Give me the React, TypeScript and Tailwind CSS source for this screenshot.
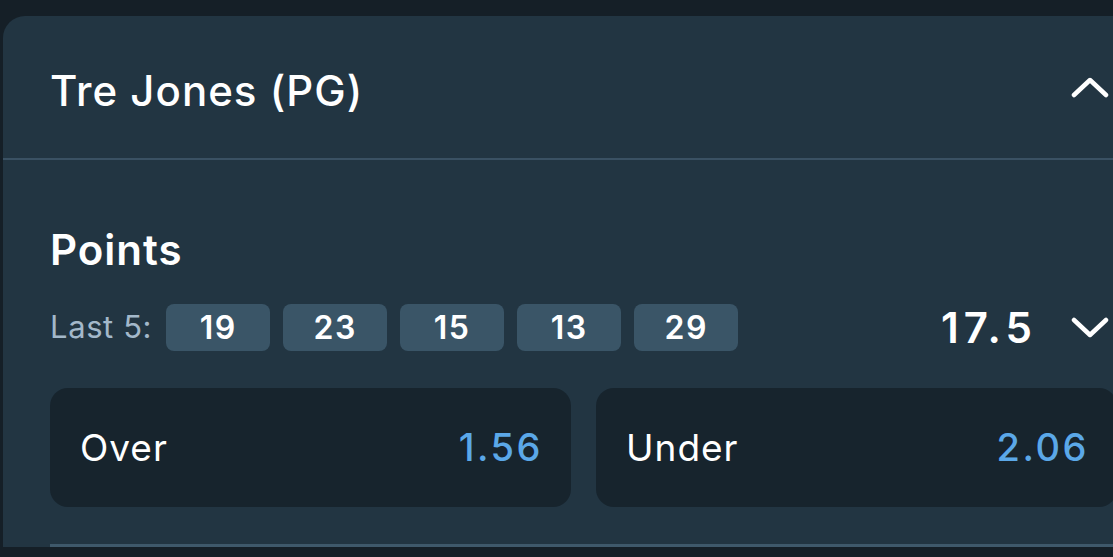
const lastFive = [19, 23, 15, 13, 29];

const Chevron = ({ up }: { up?: boolean }) => (
  <svg width="38" height="22" viewBox="0 0 38 22" fill="none" className="shrink-0">
    <polyline
      points={up ? "3,19 19,4 35,19" : "3,3 19,18 35,3"}
      stroke="white"
      strokeWidth="4.5"
      strokeLinecap="round"
      strokeLinejoin="round"
    />
  </svg>
);

const OddsButton = ({ label, price }: { label: string; price: string }) => (
  <button className="flex h-[119px] flex-1 items-center justify-between rounded-[18px] bg-[#17242d] pl-[30px] pr-[31px]">
    <span className="text-[37px] font-normal tracking-[1px] text-white">{label}</span>
    <span className="-mr-[3px] text-[38px] font-medium tracking-[2.5px] text-[#5ba8e8]">
      {price}
    </span>
  </button>
);

export default function App() {
  return (
    <div
      className="h-[557px] w-[1113px] overflow-hidden bg-[#151f27] pt-4 pl-[3px]"
      style={{ fontFamily: "Inter, 'Noto Sans', sans-serif" }}
    >
      <div className="w-[1161px] rounded-tl-[22px] bg-[#223542]">
        {/* Player header */}
        <div className="flex h-[144px] items-center border-b-2 border-[#3a5163] pl-[47px] pr-[47px]">
          <h2 className="mt-[6px] text-[42px] font-medium tracking-[1px] text-white">
            Tre Jones (PG)
          </h2>
          <div className="ml-auto mr-[8px] flex">
            <Chevron up />
          </div>
        </div>

        {/* Market */}
        <div className="pl-[47px] pr-[47px] pt-[69px]">
          <h3 className="text-[42px] leading-none font-semibold tracking-[1px] text-white">
            Points
          </h3>

          <div className="mt-[33px] flex h-[47px] items-center">
            <span className="mr-[14px] text-[31px] tracking-[0.6px] text-[#a3b8ca]">Last 5:</span>
            <div className="flex gap-[13px]">
              {lastFive.map((n, i) => (
                <div
                  key={i}
                  className="flex h-[47px] w-[104px] items-center justify-center rounded-[8px] bg-[#3a5567] text-[32px] font-semibold tracking-[1.5px] text-white"
                >
                  {n}
                </div>
              ))}
            </div>
            <div className="ml-auto mr-[8px] flex items-center gap-[34px]">
              <span className="text-[42px] font-semibold tracking-[5px] text-white">17.5</span>
              <Chevron />
            </div>
          </div>

          <div className="mt-[37px] flex gap-[25px]">
            <OddsButton label="Over" price="1.56" />
            <OddsButton label="Under" price="2.06" />
          </div>

          <div className="mt-[37px] h-[3px] bg-[#3f596b]" />
        </div>
      </div>
    </div>
  );
}
